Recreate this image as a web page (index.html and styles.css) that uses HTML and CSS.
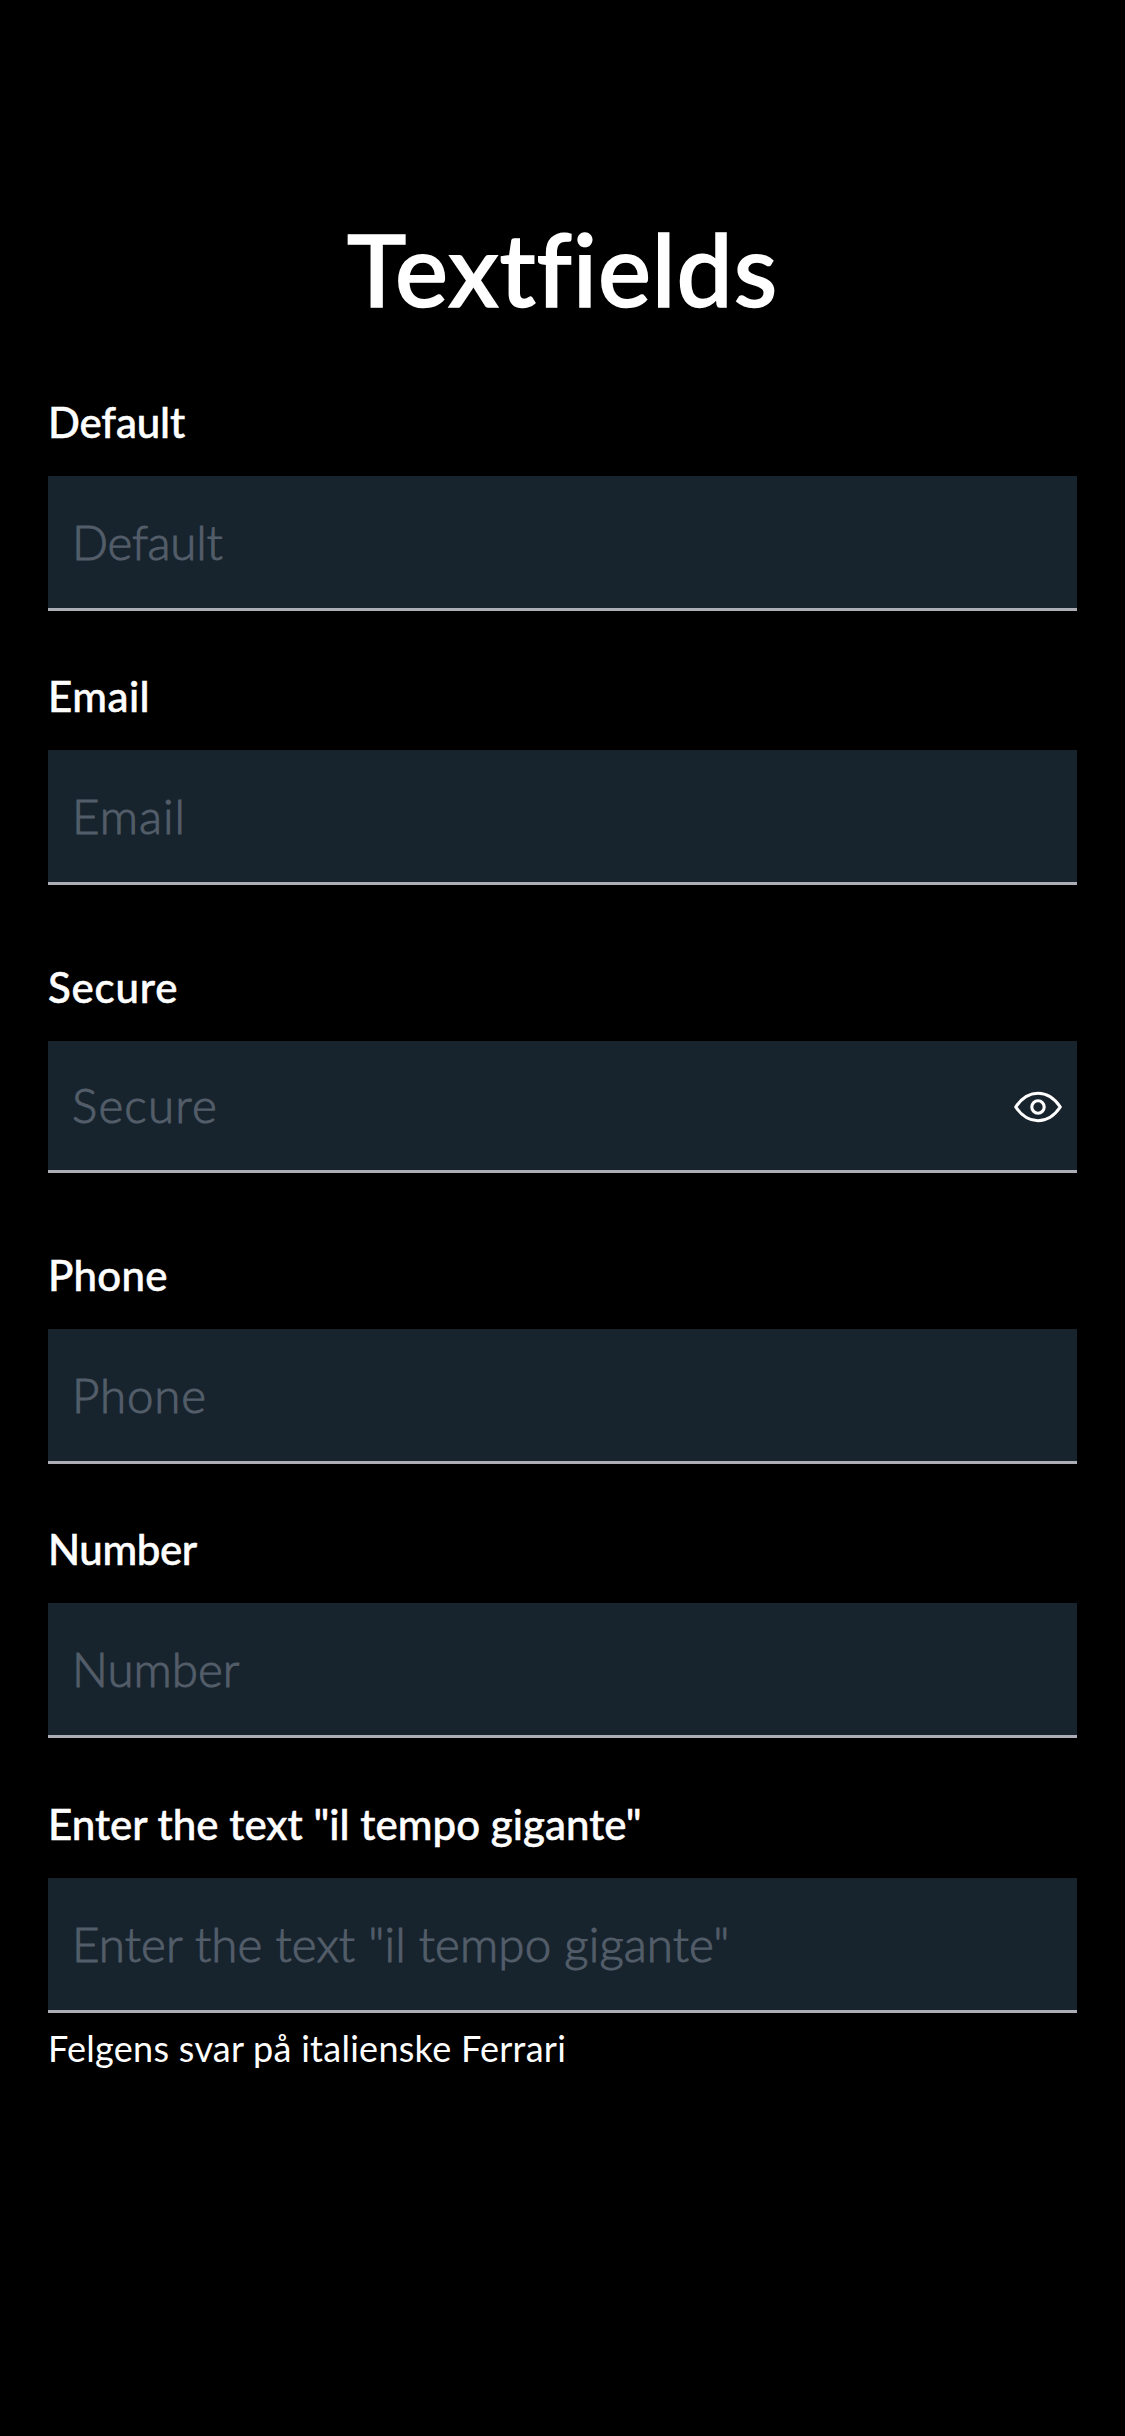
FILE: index.html
```
<!DOCTYPE html>
<html lang="en">
<head>
<meta charset="utf-8">
<title>Textfields</title>
<link rel="stylesheet" href="styles.css">
</head>
<body>
<main class="screen">
  <h1 class="title">Textfields</h1>
  <section class="group default">
    <div class="label">Default</div>
    <div class="field"><span class="placeholder">Default</span></div>
  </section>
  <section class="group email">
    <div class="label">Email</div>
    <div class="field"><span class="placeholder">Email</span></div>
  </section>
  <section class="group secure">
    <div class="label">Secure</div>
    <div class="field">
      <span class="placeholder">Secure</span>
      <svg class="eye" width="50" height="34" viewBox="0 0 50 34" fill="none" stroke="#fff" stroke-width="3.1" stroke-linejoin="round">
        <path d="M2.700 17C8.600 8.300 16.400 3.300 25 3.300S41.400 8.300 47.300 17C41.400 25.700 33.600 30.700 25 30.700S8.600 25.700 2.700 17Z"/>
        <circle cx="25" cy="17" r="6.200"/>
      </svg>
    </div>
  </section>
  <section class="group phone">
    <div class="label">Phone</div>
    <div class="field"><span class="placeholder">Phone</span></div>
  </section>
  <section class="group number">
    <div class="label">Number</div>
    <div class="field"><span class="placeholder">Number</span></div>
  </section>
  <section class="group phrase">
    <div class="label">Enter the text "il tempo gigante"</div>
    <div class="field"><span class="placeholder">Enter the text "il tempo gigante"</span></div>
    <div class="help">Felgens svar på italienske Ferrari</div>
  </section>
</main>
</body>
</html>
```

FILE: styles.css
```
* { box-sizing: border-box; }

body {
  margin: 0;
  background: #000;
  color: #fff;
  font-family: Lato, "Open Sans", sans-serif;
}

.screen {
  height: 2436px;
  padding: 208px 48px 0;
}

.title {
  margin: 0 0 69px;
  font-size: 100px;
  font-weight: 500;
  line-height: 120px;
  letter-spacing: 0.9px;
  text-align: center;
  -webkit-text-stroke: 1.6px #fff;
}

.group { margin-bottom: 60px; }

.label {
  margin-bottom: 29px;
  font-size: 42px;
  font-weight: 500;
  line-height: 50px;
  white-space: nowrap;
  letter-spacing: -0.15px;
  -webkit-text-stroke: 0.5px #fff;
}

.field {
  display: flex;
  align-items: center;
  justify-content: space-between;
  height: 135px;
  padding: 0 14px 0 24px;
  background: #17242e;
  border-bottom: 3px solid #adadb5;
}

.placeholder {
  color: #535d69;
  font-size: 47.5px;
  font-weight: 300;
  line-height: 58px;
  white-space: nowrap;
  letter-spacing: -0.25px;
  -webkit-text-stroke: 1px #535d69;
}

.eye {
  position: relative;
  top: 1px;
}

.help {
  margin-top: 13px;
  font-size: 36px;
  line-height: 44px;
  letter-spacing: 0.27px;
}

/* Per-field tracking and spacing */
.email { margin-bottom: 77px; }
.email .label { letter-spacing: 0.5px; }
.email .placeholder { letter-spacing: 1px; }

.secure { margin-bottom: 77px; }
.secure .field { height: 132px; }
.secure .label { letter-spacing: 0.8px; }
.secure .placeholder { padding-bottom: 2px; letter-spacing: 1.2px; }

.phone .label { letter-spacing: 0.25px; }
.phone .placeholder { letter-spacing: 0.8px; }

.number { margin-bottom: 61px; }
.number .label { letter-spacing: -0.4px; }
.number .placeholder { letter-spacing: 0; }

.phrase .label { letter-spacing: 0.04px; }
.phrase .placeholder { letter-spacing: 0.12px; }
```
